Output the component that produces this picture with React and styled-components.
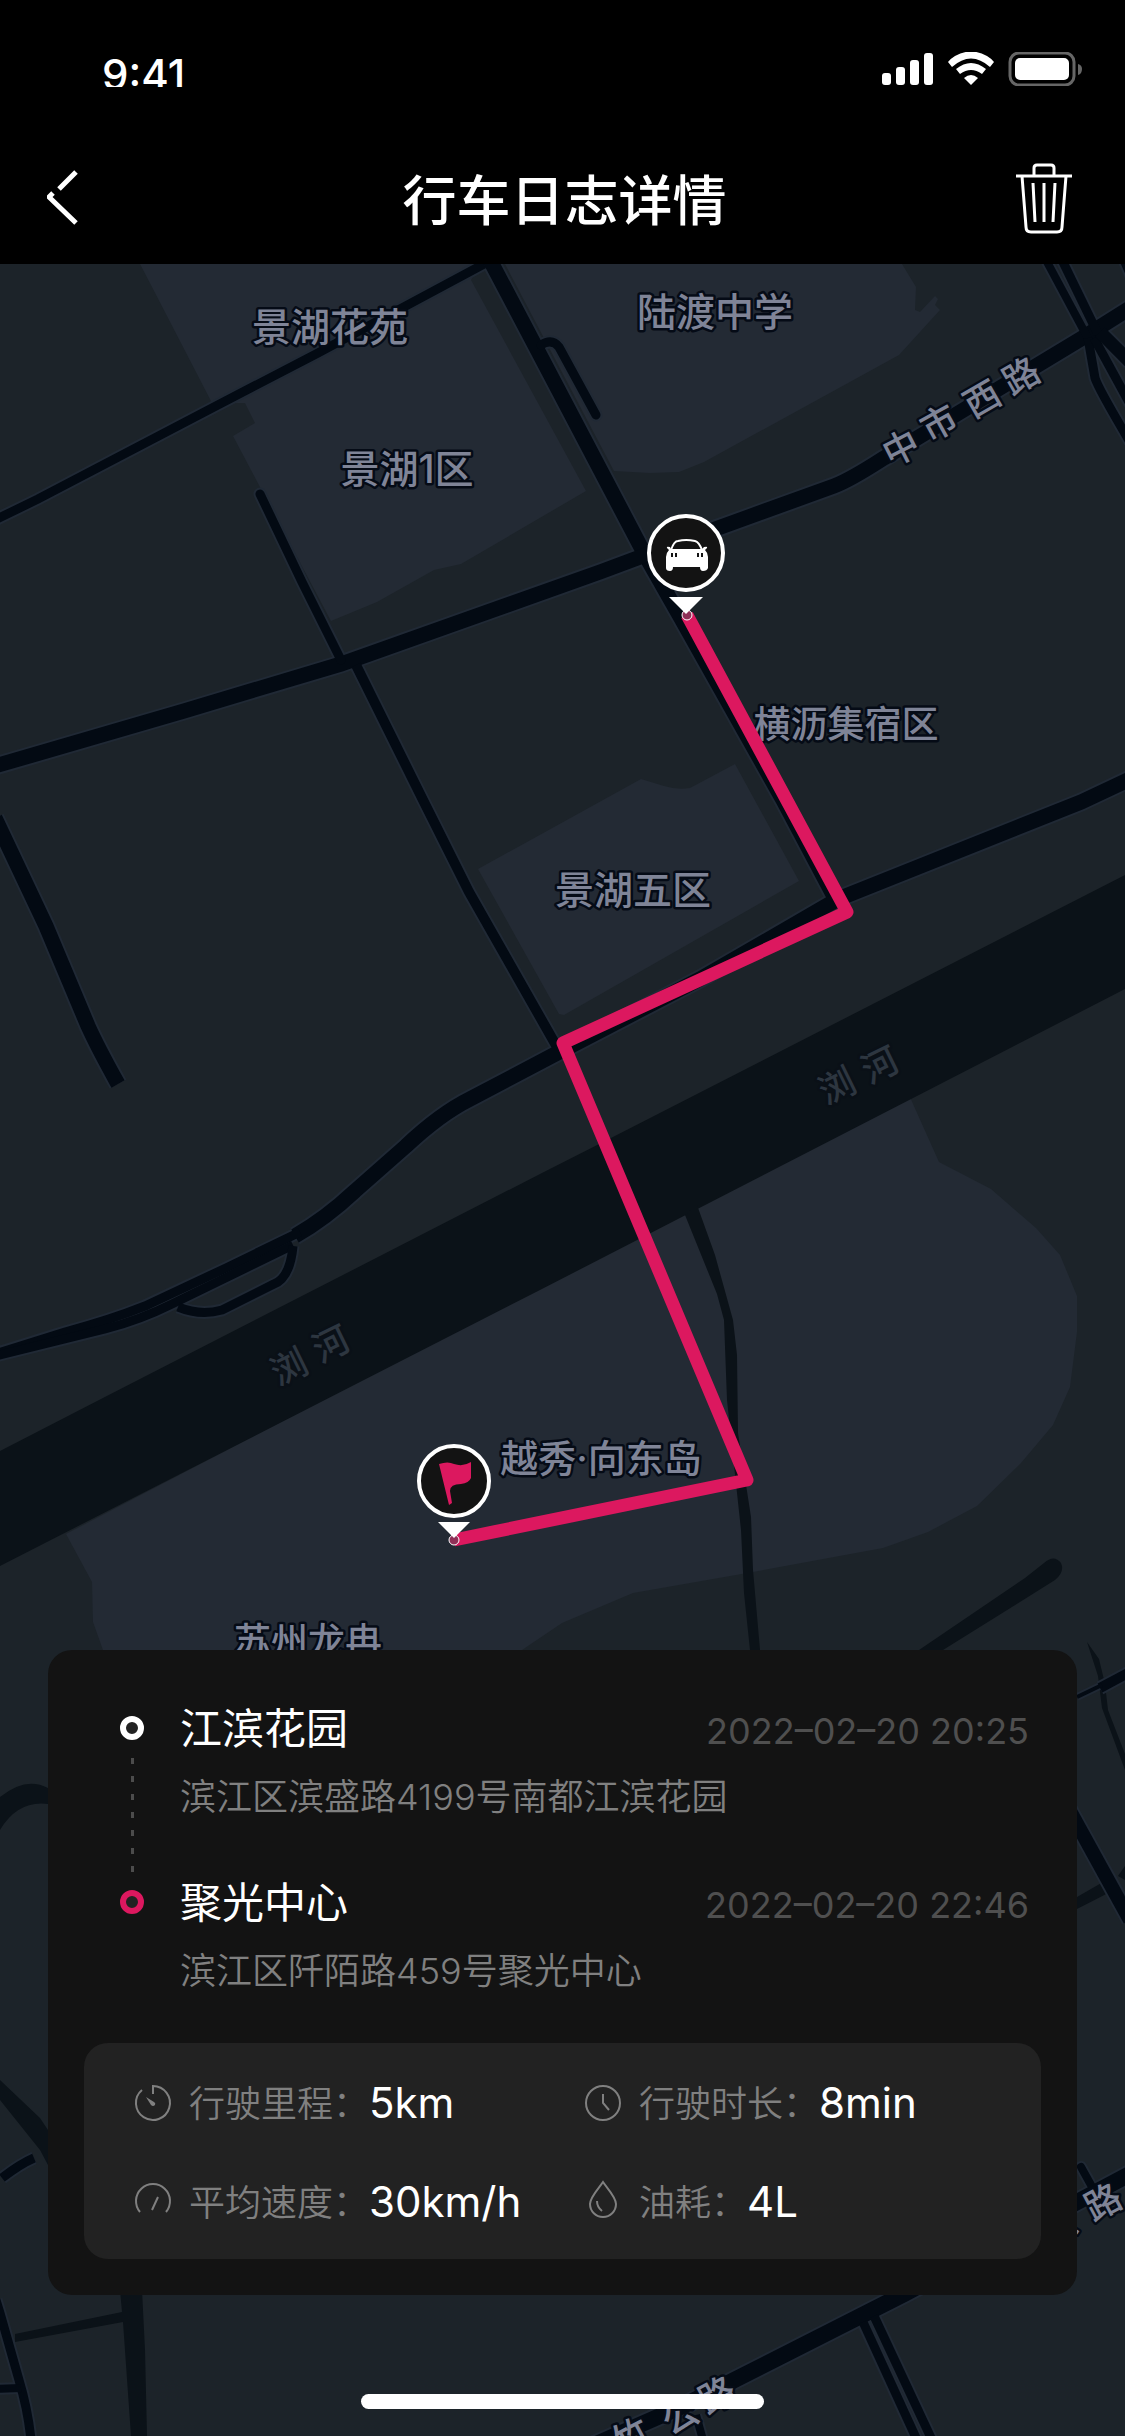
import React from 'react'
import styled, { createGlobalStyle } from 'styled-components'

const stops = [
  {
    name: '江滨花园',
    address: '滨江区滨盛路4199号南都江滨花园',
    time: '2022–02–20 20:25',
    color: '#ffffff',
  },
  {
    name: '聚光中心',
    address: '滨江区阡陌路459号聚光中心',
    time: '2022–02–20 22:46',
    color: '#dc185f',
  },
]

const stats = [
  { icon: 'mileage', label: '行驶里程：', value: '5km' },
  { icon: 'duration', label: '行驶时长：', value: '8min' },
  { icon: 'speed', label: '平均速度：', value: '30km/h' },
  { icon: 'fuel', label: '油耗：', value: '4L' },
]

// area names, x / y is the middle of the text
const places = [
  { text: '景湖花苑', x: 330, y: 327, size: 39 },
  { text: '陆渡中学', x: 715, y: 312, size: 39 },
  { text: '景湖1区', x: 407, y: 469, size: 39 },
  { text: '横沥集宿区', x: 846, y: 724, size: 37 },
  { text: '景湖五区', x: 633, y: 890, size: 39 },
  { text: '越秀·向东岛', x: 601, y: 1458, size: 38 },
  { text: '苏州龙冉', x: 308, y: 1641, size: 37 },
]

// street names follow the road one character at a time
const streetChars = [
  { text: '中', x: 901, y: 448, angle: -27 },
  { text: '市', x: 939, y: 423, angle: -29 },
  { text: '西', x: 982, y: 399, angle: -30 },
  { text: '路', x: 1021, y: 376, angle: -30 },
  { text: '公', x: 1059, y: 2226, angle: -28 },
  { text: '路', x: 1103, y: 2202, angle: -28 },
  { text: '竹', x: 631, y: 2436, angle: -28 },
  { text: '公', x: 680, y: 2416, angle: -28 },
  { text: '路', x: 717, y: 2395, angle: -28 },
]

const riverChars = [
  { text: '浏', x: 289, y: 1367, angle: -26 },
  { text: '河', x: 331, y: 1344, angle: -26 },
  { text: '浏', x: 837, y: 1086, angle: -26 },
  { text: '河', x: 880, y: 1065, angle: -26 },
]

const blocks = [
  'M140 264L152 287L212 403L245 403L255 423L233 436L331 621L377 602L434 570L461 564L586 491L471 280L480 264Z',
  'M505 264L614 471L650 473L679 472L704 462L899 355L940 310L935 305L938 299L935 296L920 312L915 310L916 287L902 264Z',
  'M478 869L641 779L664 786Q677 790 690 788L735 764L799 881L564 1015L559 1014Z',
  'M66 1534L92 1582L93 1622L103 1650L140 1720L480 1700L522 1650L562 1623L633 1593L753 1572L883 1548L928 1532L977 1506L1021 1463L1053 1425L1070 1387L1077 1332L1077 1296L1060 1255L1036 1228L991 1189L939 1162L909 1095Z',
]

const water = [
  'M0 1451L99 1400L540 1174L609 1139L1125 875V989L540 1290L0 1566Z',
  'M685 1215L717 1294L724 1320L727 1400L741 1530L744 1593L750 1650H760L753 1570L751 1517L738 1433L737 1355L733 1320L715 1255L697 1205Z',
  'M919 1650L1025 1578L1044 1563Q1054 1554 1061 1563Q1065 1572 1055 1580L943 1650Z',
  'M1087 1642L1099 1659L1105 1684L1108 1710L1125 1754V1770L1102 1708L1098 1676Z',
  'M0 1797Q26 1776 48 1788V1804Q18 1800 0 1830Z',
  'M0 2080L40 2118L48 2130V2165L40 2150L0 2100Z',
  'M120 2290L122 2312L15 2334V2342L123 2322L131 2436H147L145 2350L142 2290Z',
  'M1077 1897L1110 1878L1118 1888L1077 1909Z',
  'M1118 1876L1125 1866V1880Z',
]

const roads = [
  { d: 'M-5 520L38 499L214 407L318 353L484 264', w: 9 },
  { d: 'M490 260L560 393L645 555L682 620L783 800L838 904', w: 15 },
  { d: 'M541 345Q552 338 559 347L596 415', w: 9, round: true },
  { d: 'M-5 766L184 711L341 664L600 572L718 528L834 486Q850 480 884 458L1084 337L1130 308', w: 15 },
  { d: 'M260 494L302 582L341 660', w: 9, round: true },
  { d: 'M356 665L423 800L469 892L557 1047', w: 10 },
  { d: 'M-5 818L46 926L88 1026Q98 1048 118 1084', w: 15 },
  { d: 'M1130 779L1081 802L838 899L700 979L563 1050L470 1099Q440 1114 406 1146L355 1191Q325 1219 295 1236', w: 15 },
  { d: 'M300 1232L226 1268L145 1306Q110 1320 65 1332L-5 1354', w: 9 },
  { d: 'M293 1245L172 1304Q140 1320 105 1329L-5 1356', w: 9 },
  { d: 'M293 1246Q290 1278 274 1284L222 1310Q200 1316 178 1307', w: 9 },
  { d: 'M1046 260L1090 342', w: 8 },
  { d: 'M1062 260L1098 334', w: 9 },
  { d: 'M1088 338L1095 378Q1098 388 1130 442', w: 9 },
  { d: 'M1094 338L1130 404', w: 9 },
  { d: 'M1100 332L1130 362', w: 13 },
  { d: 'M1122 258L1130 276', w: 7 },
  { d: 'M1065 1802L1130 1920', w: 14 },
  { d: 'M1100 1688L1130 1672', w: 10 },
  { d: 'M1077 1697L1102 1685', w: 4 },
  { d: 'M2 2178Q20 2164 34 2158', w: 9 },
  { d: 'M-4 2300L0 2313L19 2380Q28 2410 31 2440', w: 9 },
  { d: 'M-5 2389L21 2388', w: 8 },
  { d: 'M560 2460L685 2405L904 2294L1130 2174', w: 16 },
  { d: 'M1081 2167L1096 2194', w: 8, round: true },
  { d: 'M863 2322L917 2440', w: 9 },
  { d: 'M874 2316L932 2440', w: 9 },
  { d: 'M696 2415L703 2440', w: 8 },
]

function MapLabel({ text, x, y, size = 36, angle = 0, river }) {
  return (
    <LabelText
      x={x}
      y={y + Math.round(size * 0.37)}
      fontSize={size}
      $river={river}
      transform={angle ? `rotate(${angle} ${x} ${y})` : undefined}
    >
      {text}
    </LabelText>
  )
}

function TripMap() {
  return (
    <MapCanvas viewBox="0 264 1125 2172" preserveAspectRatio="xMidYMin slice" role="img" aria-label="行车轨迹">
      {blocks.map((d) => <path key={d} d={d} fill="#232a34" />)}
      {water.map((d) => <path key={d} d={d} fill="#0b1218" />)}
      {roads.map(({ d, w, round }) => (
        <path key={d} d={d} fill="none" stroke="#202935" strokeWidth={w + 4} strokeLinecap={round ? 'round' : 'butt'} />
      ))}
      {roads.map(({ d, w, round }) => (
        <path key={d} d={d} fill="none" stroke="#030a13" strokeWidth={w} strokeLinecap={round ? 'round' : 'butt'} />
      ))}
      {places.map((p) => <MapLabel key={p.text} {...p} />)}
      {streetChars.map((c) => <MapLabel key={`${c.x}-${c.y}`} {...c} />)}
      {riverChars.map((c) => <MapLabel key={`${c.x}-${c.y}`} {...c} river />)}

      <path
        d="M687 615L847 912L563 1043L747 1480L454 1540"
        fill="none"
        stroke="#dc185f"
        strokeWidth="13"
        strokeLinejoin="round"
      />

      {/* start */}
      <circle cx="687" cy="615" r="5" fill="#8f3057" stroke="#fff" />
      <path d="M669 597H703L686 614Z" fill="#fff" />
      <circle cx="686" cy="553" r="37" fill="#131313" stroke="#fff" strokeWidth="4" />
      <path d="M671 550Q674 541 678 541Q686 539 695 541Q699 542 702 550" fill="none" stroke="#fff" strokeWidth="2" />
      <path
        d="M671 549H702L704 547Q708 546 707 548L705 550Q708 553 708 557V568Q707 571 703 571Q700 571 700 567H673Q673 571 670 571Q666 571 666 568V557Q666 553 669 550L667 548Q666 546 670 547Z"
        fill="#fff"
      />
      <path d="M671 553h2v4h-2zM675 553h2v4h-2zM697 553h2v4h-2zM701 553h2v4h-2z" fill="#131313" />

      {/* finish */}
      <circle cx="454" cy="1540" r="5" fill="#8f3057" stroke="#fff" />
      <path d="M438 1522H470L454 1538Z" fill="#fff" />
      <circle cx="454" cy="1481" r="35" fill="#131313" stroke="#fff" strokeWidth="4" />
      <path
        d="M439 1464Q448 1461 454 1464Q463 1467 471 1462V1478Q469 1483 461 1484Q450 1484 450 1491L452 1503L449 1505Z"
        fill="#dc185f"
      />
    </MapCanvas>
  )
}

function StatIcon({ name }) {
  return (
    <StatSvg viewBox="0 0 36 36" aria-hidden="true">
      {name === 'mileage' && (
        <>
          <path d="M18 9V1A17 17 0 1 1 7 5" />
          <path d="M11 12L16 20Q18 22 20 20Q21 18 19 17Z" fill="#808080" stroke="none" />
        </>
      )}
      {name === 'duration' && (
        <>
          <circle cx="18" cy="18" r="17" />
          <path d="M18 9V18L24 25" />
        </>
      )}
      {name === 'speed' && (
        <path d="M5 28A17 17 0 1 1 31 28M23 13L17 26" />
      )}
      {name === 'fuel' && (
        <path d="M18 -2C14 4 5 13 5 20A13 13 0 0 0 31 20C31 13 22 4 18 -2ZM12 17Q12 23 17 27" />
      )}
    </StatSvg>
  )
}

function App() {
  return (
    <Screen>
      <GlobalStyle />
      <Header>
        <StatusBar>
          <Clock>9:41</Clock>
          <StatusIcons viewBox="0 0 200 34" aria-hidden="true">
            <rect x="0" y="21" width="9" height="12" rx="3" />
            <rect x="14" y="15" width="9" height="18" rx="3" />
            <rect x="28" y="8" width="9" height="25" rx="3" />
            <rect x="42" y="1" width="9" height="32" rx="3" />
            <path d="M66 10Q68 7 73 4Q89 -5 105 4Q110 7 112 10L108 15Q89 -2 70 15Z" />
            <path d="M74 17Q89 5 104 17L100 22Q89 14 78 22Z" />
            <path d="M82 26Q89 20 96 26L89 33Z" />
            <rect x="128" y="1" width="64" height="32" rx="9" fill="none" stroke="#666" strokeWidth="3" />
            <rect x="133" y="6" width="54" height="22" rx="5" />
            <path d="M196 12Q200 13 200 17Q200 22 196 23Z" fill="#666" />
          </StatusIcons>
        </StatusBar>
        <NavBar>
          <NavButton type="button" aria-label="返回" $width={66}>
            <svg width="32" height="56" viewBox="0 0 32 56">
              <path d="M29 2L12 19M6 23L2 27L29 53" strokeWidth="5" />
            </svg>
          </NavButton>
          <Title>行车日志详情</Title>
          <NavButton type="button" aria-label="删除" $width={56}>
            <svg width="56" height="72" viewBox="0 0 56 72">
              <path d="M0 14H56M18 14V6Q18 3 21 3H35Q38 3 38 6V14M6 14L10 65Q10 70 15 70H41Q46 70 46 65L50 14M17 21L19 60M28 21V60M39 21L37 60" strokeWidth="3" />
            </svg>
          </NavButton>
        </NavBar>
      </Header>

      <MapArea>
        <TripMap />
        <Card>
          <StopList>
            {stops.map((stop, i) => (
              <Stop key={stop.name}>
                <Marker>
                  <Dot $color={stop.color} />
                  {i < stops.length - 1 && <Dashes />}
                </Marker>
                <StopText $last={i === stops.length - 1}>
                  <StopHead>
                    <StopName>{stop.name}</StopName>
                    <StopTime>{stop.time}</StopTime>
                  </StopHead>
                  <Address>{stop.address}</Address>
                </StopText>
              </Stop>
            ))}
          </StopList>
          <Stats>
            {stats.map((stat) => (
              <Stat key={stat.label}>
                <StatIcon name={stat.icon} />
                <StatLabel>{stat.label}</StatLabel>
                <StatValue>{stat.value}</StatValue>
              </Stat>
            ))}
          </Stats>
        </Card>
        <HomeIndicator />
      </MapArea>
    </Screen>
  )
}

const GlobalStyle = createGlobalStyle`
  * {
    box-sizing: border-box;
  }
  body {
    margin: 0;
    background: #000;
    color: #fff;
    font-family: 'Inter', 'Noto Sans CJK SC', sans-serif;
  }
`

const Screen = styled.div`
  display: flex;
  flex-direction: column;
  min-height: 100vh;
`

const Header = styled.header`
  background: #000;
`

const StatusBar = styled.div`
  display: flex;
  justify-content: space-between;
  height: 132px;
  padding: 52px 43px 0 102px;
`

const Clock = styled.span`
  height: 35px;
  overflow: hidden;
  font-size: 42px;
  font-weight: 500;
  line-height: 45px;
`

const StatusIcons = styled.svg`
  width: 200px;
  height: 34px;
  fill: #fff;
`

const NavBar = styled.div`
  display: flex;
  align-items: center;
  justify-content: space-between;
  height: 132px;
  padding: 0 53px 0 47px;
`

const NavButton = styled.button`
  display: flex;
  width: ${(props) => props.$width}px;
  padding: 0;
  border: 0;
  background: none;
  cursor: pointer;
  svg {
    fill: none;
    stroke: #fff;
  }
`

const Title = styled.h1`
  margin: 0;
  font-family: 'Noto Sans CJK SC', sans-serif;
  font-size: 54px;
  font-weight: 500;
  line-height: 72px;
`

const MapArea = styled.main`
  position: relative;
  flex: 1;
  display: flex;
  flex-direction: column;
  justify-content: flex-end;
  overflow: hidden;
  padding: 0 48px 27px;
  background: #1c2329;
`

const MapCanvas = styled.svg`
  position: absolute;
  inset: 0;
  width: 100%;
  height: 100%;
`

const LabelText = styled.text`
  fill: ${(props) => (props.$river ? '#2d3640' : '#7f8497')};
  stroke: ${(props) => (props.$river ? '#0a1017' : '#050b16')};
  stroke-width: 5px;
  stroke-linejoin: round;
  paint-order: stroke;
  text-anchor: middle;
  font-weight: 500;
`

const Card = styled.section`
  position: relative;
  margin-bottom: 99px;
  padding: 48px 36px 36px;
  border-radius: 24px;
  background: #131313;
`

const StopList = styled.ol`
  margin: 0 0 45px;
  padding: 0 12px 0 36px;
  list-style: none;
`

const Stop = styled.li`
  display: flex;
  gap: 36px;
`

const Marker = styled.div`
  display: flex;
  flex-direction: column;
  align-items: center;
  gap: 18px;
  padding-top: 18px;
`

const Dot = styled.span`
  width: 24px;
  height: 24px;
  border: 6px solid ${(props) => props.$color};
  border-radius: 50%;
  background: #222;
`

const Dashes = styled.span`
  flex: 1;
  width: 3px;
  background: repeating-linear-gradient(#4c4c4c 0 6px, transparent 6px 18px);
`

const StopText = styled.div`
  flex: 1;
  padding-bottom: ${(props) => (props.$last ? '0' : '48px')};
`

const StopHead = styled.div`
  display: flex;
  align-items: baseline;
  justify-content: space-between;
  margin-bottom: 16px;
`

const StopName = styled.h2`
  margin: 0;
  font-family: 'Noto Sans CJK SC', sans-serif;
  font-size: 42px;
  font-weight: 400;
  line-height: 56px;
`

const StopTime = styled.time`
  color: #4f4f4f;
  font-size: 36px;
  line-height: 40px;
`

const Address = styled.p`
  height: 54px;
  margin: 0;
  color: #808080;
  font-size: 36px;
  font-weight: 350;
  line-height: 54px;
`

const Stats = styled.dl`
  display: grid;
  grid-template-columns: 10fr 9fr;
  row-gap: 39px;
  margin: 0;
  padding: 30px 51px 27px;
  border-radius: 24px;
  background: #222;
`

const Stat = styled.div`
  display: flex;
  align-items: center;
`

const StatSvg = styled.svg`
  width: 36px;
  height: 36px;
  margin-right: 18px;
  overflow: visible;
  fill: none;
  stroke: #808080;
  stroke-width: 2px;
`

const StatLabel = styled.dt`
  padding-bottom: 4px;
  color: #808080;
  font-family: 'Noto Sans CJK SC', sans-serif;
  font-size: 36px;
  font-weight: 350;
  line-height: 56px;
`

const StatValue = styled.dd`
  margin: 0;
  font-size: 42px;
  line-height: 60px;
`

const HomeIndicator = styled.div`
  position: relative;
  align-self: center;
  width: 403px;
  height: 15px;
  border-radius: 8px;
  background: #fff;
`

export default App
